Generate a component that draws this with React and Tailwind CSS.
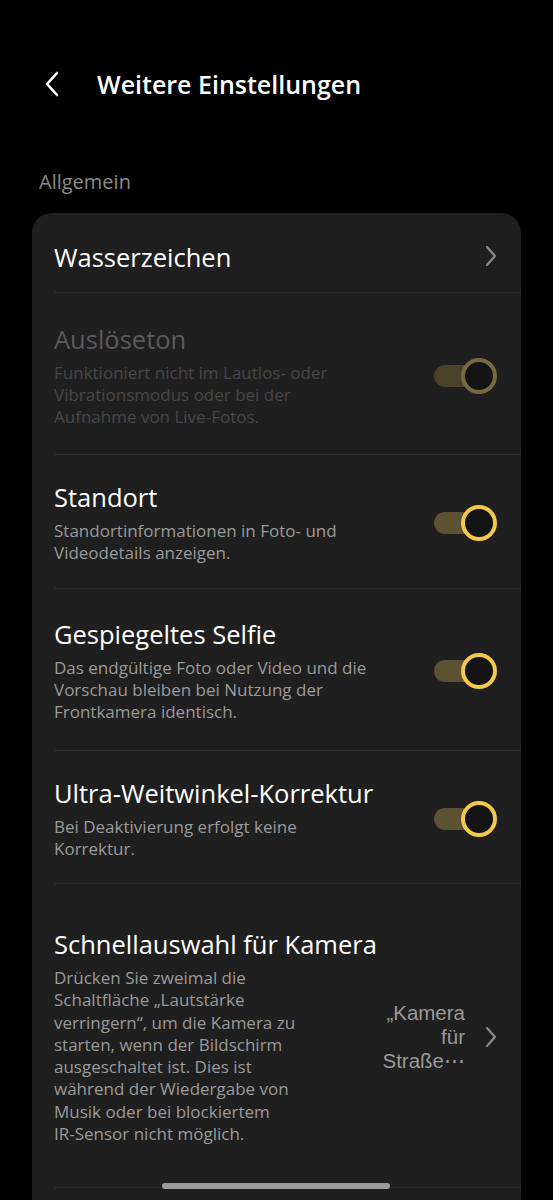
import React from "react";

const font = { fontFamily: '"Open Sans", "Noto Sans", sans-serif' };
const valueFont = { fontFamily: '"Liberation Sans", Arial, sans-serif' };

function Chevron({ className = "" }) {
  return (
    <svg width="12" height="22" viewBox="0 0 12 22" className={className} fill="none">
      <path d="M2 2 L10 11 L2 20" stroke="#8a8a8a" strokeWidth="2.2" strokeLinecap="round" strokeLinejoin="round" />
    </svg>
  );
}

function Toggle({ disabled }) {
  return (
    <div className="relative w-[63px] h-[36px] shrink-0">
      <div
        className={
          "absolute left-0 top-1/2 -translate-y-1/2 w-[50px] h-[22px] rounded-full " +
          (disabled ? "bg-[#4a4229]" : "bg-[#5c5131]")
        }
      />
      <div
        className={
          "absolute right-0 top-0 w-[36px] h-[36px] rounded-full border-[4px] bg-[#141414] " +
          (disabled ? "border-[#786a3e]" : "border-[#f2c94a]")
        }
      />
    </div>
  );
}

function Lines({ lines, className }) {
  return (
    <div className={className}>
      {lines.map((l, i) => (
        <div key={i} className="whitespace-nowrap">
          {l}
        </div>
      ))}
    </div>
  );
}

function ToggleRow({ title, lines, disabled, pad }) {
  return (
    <div className={"flex items-center border-t border-[#2e2e2e] pr-[24px] " + pad}>
      <div className="flex-1 min-w-0">
        <div
          className={
            "text-[25.5px] leading-[32px] font-medium " + (disabled ? "text-[#5a5a5a]" : "text-white")
          }
        >
          {title}
        </div>
        <Lines
          lines={lines}
          className={
            "mt-[7px] text-[17px] leading-[22px] " + (disabled ? "text-[#474747]" : "text-[#9a9a9a]")
          }
        />
      </div>
      <Toggle disabled={disabled} />
    </div>
  );
}

export default function App() {
  return (
    <div className="relative w-[553px] h-[1200px] overflow-hidden bg-black" style={font}>
      {/* Header */}
      <div className="flex items-center h-[56px] mt-[56px]">
        <svg width="16" height="26" viewBox="0 0 16 26" className="ml-[44px]" fill="none">
          <path d="M13 2 L3 13 L13 24" stroke="white" strokeWidth="2.6" strokeLinecap="round" strokeLinejoin="round" />
        </svg>
        <div className="ml-[37px] text-[25px] leading-[34px] font-semibold text-white">
          Weitere Einstellungen
        </div>
      </div>

      {/* Section label */}
      <div className="mt-[56px] ml-[39px] text-[20px] leading-[28px] text-[#8a8a8a]">Allgemein</div>

      {/* Card */}
      <div className="mt-[17px] mx-[32px] rounded-[20px] bg-[#1f1f1f] pl-[22px]">
        <div className="flex items-center h-[79px] pr-[24px]">
          <div className="flex-1 text-[25.5px] leading-[32px] font-medium text-white pt-[8px]">Wasserzeichen</div>
          <Chevron className="mt-[6px]" />
        </div>

        <ToggleRow
          title="Auslöseton"
          disabled
          pad="pt-[30px] pb-[26px]"
          lines={["Funktioniert nicht im Lautlos- oder", "Vibrationsmodus oder bei der", "Aufnahme von Live-Fotos."]}
        />
        <ToggleRow
          title="Standort"
          pad="pt-[26px] pb-[24px]"
          lines={["Standortinformationen in Foto- und", "Videodetails anzeigen."]}
        />
        <ToggleRow
          title="Gespiegeltes Selfie"
          pad="pt-[29px] pb-[27px]"
          lines={["Das endgültige Foto oder Video und die", "Vorschau bleiben bei Nutzung der", "Frontkamera identisch."]}
        />
        <ToggleRow
          title="Ultra-Weitwinkel-Korrektur"
          pad="pt-[26px] pb-[23px]"
          lines={["Bei Deaktivierung erfolgt keine", "Korrektur."]}
        />

        <div className="flex items-center border-t border-[#2e2e2e] pr-[24px] pt-[44px] pb-[42px]">
          <div className="flex-1 min-w-0">
            <div className="text-[25.5px] leading-[32px] font-medium text-white">Schnellauswahl für Kamera</div>
            <Lines
              className="mt-[7px] text-[17px] leading-[22.3px] text-[#9a9a9a]"
              lines={[
                "Drücken Sie zweimal die",
                "Schaltfläche „Lautstärke",
                "verringern“, um die Kamera zu",
                "starten, wenn der Bildschirm",
                "ausgeschaltet ist. Dies ist",
                "während der Wiedergabe von",
                "Musik oder bei blockiertem",
                "IR-Sensor nicht möglich.",
              ]}
            />
          </div>
          <div className="flex items-center">
            <div
              className="text-right text-[20.5px] leading-[24px] text-[#9a9a9a] mr-[20px] whitespace-nowrap"
              style={valueFont}
            >
              „Kamera
              <br />
              für
              <br />
              Straße⋯
            </div>
            <Chevron />
          </div>
        </div>

        <div className="border-t border-[#2e2e2e] h-[80px]" />
      </div>

      {/* Home indicator */}
      <div className="absolute left-[162px] bottom-[11px] w-[228px] h-[6px] rounded-full bg-[#9a9a9a]" />
    </div>
  );
}
